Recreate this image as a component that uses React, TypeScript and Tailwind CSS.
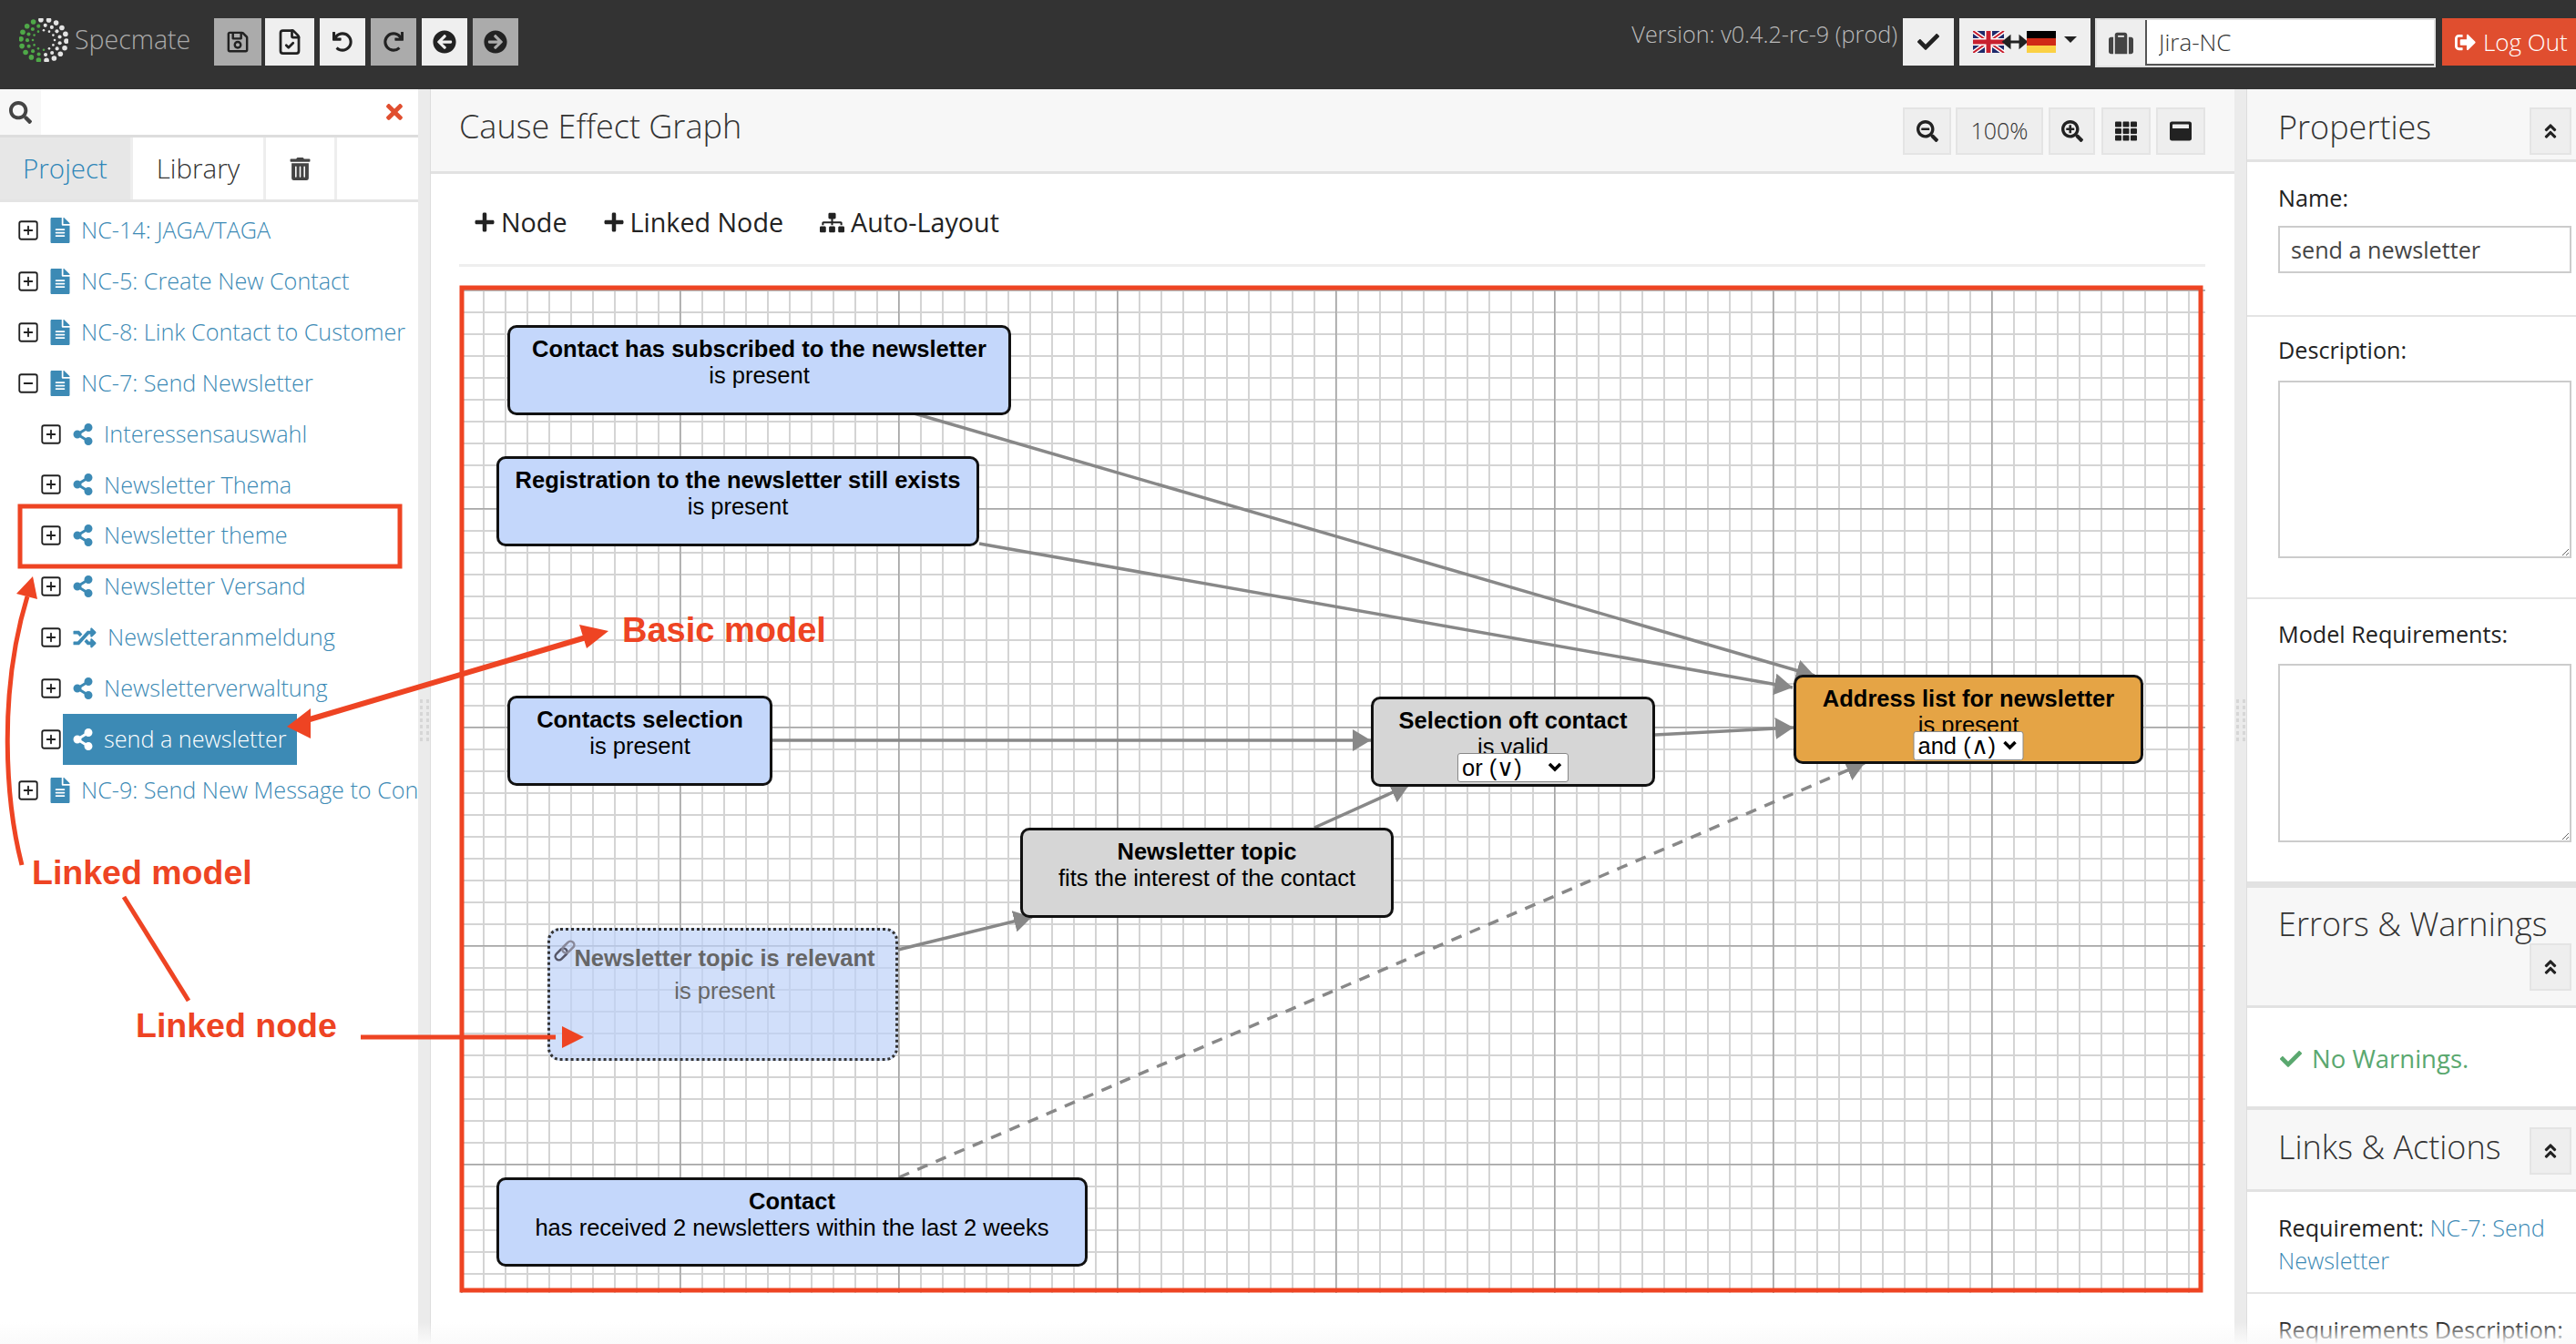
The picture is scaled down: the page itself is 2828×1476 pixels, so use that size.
import React from 'react';
import { FileCheck, SquareMinus, SquarePlus } from 'lucide-react';
import {
    FaAngleDoubleUp, FaArrowCircleLeft, FaArrowCircleRight, FaCheck, FaFileAlt, FaPlus, FaRandom, FaRedo, FaRegSave,
    FaSearch, FaSearchMinus, FaSearchPlus, FaShareAlt, FaSignOutAlt, FaSitemap, FaSuitcase, FaTh, FaTimes, FaTrashAlt,
    FaUndo, FaWindowMaximize,
} from 'react-icons/fa';

const TREE = [
    { label: 'NC-14: JAGA/TAGA', kind: 'doc' },
    { label: 'NC-5: Create New Contact', kind: 'doc' },
    { label: 'NC-8: Link Contact to Customer', kind: 'doc' },
    { label: 'NC-7: Send Newsletter', kind: 'doc', open: true },
    { label: 'Interessensauswahl', kind: 'share', child: true },
    { label: 'Newsletter Thema', kind: 'share', child: true },
    { label: 'Newsletter theme', kind: 'share', child: true },
    { label: 'Newsletter Versand', kind: 'share', child: true },
    { label: 'Newsletteranmeldung', kind: 'random', child: true },
    { label: 'Newsletterverwaltung', kind: 'share', child: true },
    { label: 'send a newsletter', kind: 'share', child: true, selected: true },
    { label: 'NC-9: Send New Message to Contact', kind: 'doc' },
];

const NODES = [
    { title: 'Contact has subscribed to the newsletter', sub: 'is present', box: 'left-[53px] top-[44px] w-[553px] h-[99px] bg-[#c4d7fb]' },
    { title: 'Registration to the newsletter still exists', sub: 'is present', box: 'left-[41px] top-[188px] w-[530px] h-[99px] bg-[#c4d7fb]' },
    { title: 'Contacts selection', sub: 'is present', box: 'left-[53px] top-[451px] w-[291px] h-[99px] bg-[#c4d7fb]' },
    { title: 'Selection oft contact', sub: 'is valid', box: 'left-[1001px] top-[452px] w-[312px] h-[99px] bg-[#d6d6d6]', op: 'or (∨)', opBox: 'w-[122px]' },
    { title: 'Address list for newsletter', sub: 'is present', box: 'left-[1465px] top-[428px] w-[384px] h-[98px] bg-[#e5a445]', op: 'and (∧)', opBox: 'w-[121px]' },
    { title: 'Newsletter topic', sub: 'fits the interest of the contact', box: 'left-[616px] top-[596px] w-[410px] h-[99px] bg-[#d6d6d6]' },
    { title: 'Contact', sub: 'has received 2 newsletters within the last 2 weeks', box: 'left-[41px] top-[980px] w-[649px] h-[98px] bg-[#c4d7fb]' },
];

const ToolButton = ({ children, dim, className }: { children: React.ReactNode; dim?: boolean; className: string }) => (
    <div className={`h-[52px] flex items-center justify-center text-[26px] text-[#222] ${dim ? 'bg-[#ababab]' : 'bg-[#efefef]'} ${className}`}>
        {children}
    </div>
);

const ViewButton = ({ children, className }: { children: React.ReactNode; className: string }) => (
    <div className={`h-[52px] flex items-center justify-center bg-[#eee] border-2 border-[#e4e4e4] text-[#222] text-[24px] ${className}`}>
        {children}
    </div>
);

const CollapseButton = ({ className }: { className?: string }) => (
    <div className={`w-[46px] h-[52px] flex items-center justify-center bg-[#eee] border-2 border-[#e4e4e4] text-[#222] text-[20px] ${className ?? ''}`}>
        <FaAngleDoubleUp />
    </div>
);

const Logo = () => {
    const dots: React.ReactNode[] = [];
    [12, 18, 25].forEach((r, ring) => {
        const count = 12 + ring * 3;
        for (let i = 0; i < count; i++) {
            const a = (i / count) * Math.PI * 2 + ring * 0.2;
            const x = 27 + Math.cos(a) * r;
            const y = 24 + Math.sin(a) * r * 0.9;
            const green = Math.cos(a) < -0.25 || (Math.sin(a) > 0.75 && Math.cos(a) < 0.1);
            dots.push(<circle key={`${ring}-${i}`} cx={x} cy={y} r={1.3 + ring * 0.75} fill={green ? '#4fa848' : '#e4e4e4'} />);
        }
    });
    return <svg width="54" height="48" viewBox="0 0 54 48">{dots}</svg>;
};

const Flags = () => (
    <svg width="92" height="24" viewBox="0 0 92 24">
        <rect width="34" height="24" fill="#1f2a6b" />
        <path d="M0 0L34 24M34 0L0 24" stroke="#fff" strokeWidth="5" />
        <path d="M0 0L34 24M34 0L0 24" stroke="#c8202f" strokeWidth="2" />
        <path d="M17 0V24M0 12H34" stroke="#fff" strokeWidth="8" />
        <path d="M17 0V24M0 12H34" stroke="#c8202f" strokeWidth="5" />
        <path d="M38 12H54M34 12l6-5v10zM58 12l-6-5v10z" stroke="#222" strokeWidth="3" fill="#222" />
        <rect x="59" width="32" height="8" fill="#000" />
        <rect x="59" y="8" width="32" height="8" fill="#d02a16" />
        <rect x="59" y="16" width="32" height="8" fill="#fbd144" />
    </svg>
);

const TreeRow = ({ label, kind, child, open, selected }: { label: string; kind: string; child?: boolean; open?: boolean; selected?: boolean }) => (
    <div className={`h-[55.9px] flex items-center whitespace-nowrap ${child ? 'pl-[43px]' : 'pl-[18px]'}`}>
        {open ? <SquareMinus size={26} strokeWidth={1.7} className="text-[#222] shrink-0" /> : <SquarePlus size={26} strokeWidth={1.7} className="text-[#222] shrink-0" />}
        <div className={`flex items-center h-[56px] pl-[10px] pr-[10px] border border-transparent ${selected ? 'bg-[#3c8ab5] border-[#337ba5] text-white' : 'text-[#3c8ab5]'}`}>
            {kind === 'doc' && <FaFileAlt className="text-[28px] w-[22px] mr-[12px]" />}
            {kind === 'share' && <FaShareAlt className="text-[24px] w-[22px] mr-[12px]" />}
            {kind === 'random' && <FaRandom className="text-[25px] w-[26px] mr-[12px]" />}
            <span className="text-[25.2px] font-light">{label}</span>
        </div>
    </div>
);

const Sidebar = () => (
    <aside className="w-[459px] shrink-0 bg-white flex flex-col overflow-hidden">
        <div className="h-[53px] flex border-b-[3px] border-[#ddd]">
            <div className="w-[45px] bg-[#f7f7f7] flex items-center justify-center text-[#444] text-[25px]"><FaSearch /></div>
            <div className="flex-1 ml-[4px] flex items-center justify-end pr-[13px] text-[#e04e2f] text-[26px]"><FaTimes /></div>
        </div>
        <div className="h-[71px] flex border-b-[3px] border-[#e4e4e4] text-[29.5px]">
            <div className="w-[143px] bg-[#e7e7e7] text-[#2f86b8] flex items-center justify-center font-light">Project</div>
            <div className="w-[149px] border-x-[3px] border-[#eee] text-[#333] flex items-center justify-center font-light">Library</div>
            <div className="w-[78px] border-r-[3px] border-[#eee] text-[#444] flex items-center justify-center text-[25px]"><FaTrashAlt /></div>
        </div>
        <div className="pt-[3px]">
            {TREE.map(row => <TreeRow key={row.label} {...row} />)}
        </div>
    </aside>
);

const Splitter = ({ handleClass }: { handleClass: string }) => (
    <div className="w-[14px] shrink-0 bg-[#ebebeb] border-r border-[#ddd] flex flex-col">
        <div className={handleClass} />
        <div className="grid grid-cols-2 gap-[3px] w-[10px] ml-[2px]">
            {Array.from({ length: 14 }).map((_, i) => <div key={i} className="w-[3px] h-[4px] bg-[#d6d6d6]" />)}
        </div>
    </div>
);

const GraphNode = ({ title, sub, box, op, opBox }: { title: string; sub: string; box: string; op?: string; opBox?: string }) => (
    <div className={`absolute rounded-[10px] border-[3px] border-[#111] text-black text-center font-['Liberation_Sans',sans-serif] text-[25.5px] leading-[29px] pt-[9px] ${box}`}>
        <div className="font-bold">{title}</div>
        <div>{sub}</div>
        {op && (
            <div className={`absolute left-1/2 -translate-x-1/2 top-[59px] h-[32px] bg-white rounded-[3px] border border-[#888] text-left pl-[4px] leading-[30px] ${opBox}`}>
                {op}
                <svg className="absolute right-[6px] top-[9px]" width="16" height="11" viewBox="0 0 16 11"><path d="M2 2l6 6 6-6" fill="none" stroke="#000" strokeWidth="3.5" /></svg>
            </div>
        )}
    </div>
);

const Canvas = () => (
    <div className="relative w-[1917px] h-[1107px] mt-[23px]">
        <svg className="absolute inset-0" width="1917" height="1107" viewBox="504 313 1917 1107">
            <defs>
                <pattern id="minor" x="506" y="318" width="24" height="24" patternUnits="userSpaceOnUse">
                    <rect width="2" height="24" fill="#d4d4d4" />
                    <rect width="24" height="2" fill="#d4d4d4" />
                </pattern>
                <pattern id="major" x="506" y="318" width="240" height="240" patternUnits="userSpaceOnUse">
                    <rect width="1.5" height="240" fill="#a6a6a6" />
                    <rect width="240" height="1.5" fill="#a6a6a6" />
                </pattern>
                <marker id="head" markerUnits="userSpaceOnUse" markerWidth="22" markerHeight="24" refX="20" refY="12" orient="auto">
                    <path d="M0 0L20 12L0 24z" fill="#888" />
                </marker>
            </defs>
            <rect x="505" y="318" width="1916" height="1102" fill="url(#minor)" />
            <rect x="505" y="318" width="1916" height="1102" fill="url(#major)" />
            <g stroke="#888" strokeWidth="3.5" fill="none">
                <path d="M1000 453L1992 742" markerEnd="url(#head)" />
                <path d="M1075 597L1968 755" markerEnd="url(#head)" />
                <path d="M848 813L1505 813" markerEnd="url(#head)" />
                <path d="M1817 807L1969 799" markerEnd="url(#head)" />
                <path d="M1443 909L1547 862" markerEnd="url(#head)" />
                <path d="M986 1043L1133 1007" markerEnd="url(#head)" />
                <path d="M987 1293L2047 838" strokeDasharray="12 10" markerEnd="url(#head)" />
            </g>
        </svg>
        {NODES.map(node => <GraphNode key={node.title} {...node} />)}
        <div className="absolute left-[97px] top-[706px] w-[385px] h-[146px] rounded-[14px] border-[3px] border-dotted border-[#333] bg-[#bdd2f8]/70 text-[#666] text-center font-['Liberation_Sans',sans-serif] text-[25.5px] pt-[12px] pl-[4px] leading-[36px]">
            <svg className="absolute left-[2px] top-[8px]" width="28" height="28" viewBox="0 0 28 28">
                <g fill="none" strokeWidth="2.5" transform="rotate(-45 14 14)">
                    <rect x="1" y="10" width="15" height="8" rx="4" stroke="#556" />
                    <rect x="12" y="10" width="15" height="8" rx="4" stroke="#889" />
                </g>
            </svg>
            <div className="font-bold">Newsletter topic is relevant</div>
            <div>is present</div>
        </div>
    </div>
);

const MainArea = () => (
    <main className="w-[1980px] shrink-0 bg-white flex flex-col overflow-hidden">
        <div className="h-[93px] shrink-0 bg-[#f7f7f7] border-b-[3px] border-[#e2e2e2] pl-[31px] pr-[32px] flex justify-between">
            <h1 className="text-[36px] font-light text-[#333] mt-[17px] h-[48px] leading-[48px]">Cause Effect Graph</h1>
            <div className="flex mt-[20px] h-[52px]">
                <ViewButton className="w-[53px]"><FaSearchMinus /></ViewButton>
                <ViewButton className="w-[96px] ml-[5px] !text-[25px] font-light text-[#333]">100%</ViewButton>
                <ViewButton className="w-[51px] ml-[6px]"><FaSearchPlus /></ViewButton>
                <ViewButton className="w-[54px] ml-[7px]"><FaTh /></ViewButton>
                <ViewButton className="w-[54px] ml-[6px]"><FaWindowMaximize /></ViewButton>
            </div>
        </div>
        <div className="flex-1 pl-[31px]">
            <div className="h-[102px] w-[1917px] border-b-[3px] border-[#eee] flex items-center pl-[16px] pt-[7px] text-[28.7px] text-[#222] -mb-[3px]">
                <FaPlus className="text-[24px] mr-[6px]" /><span>Node</span>
                <FaPlus className="text-[24px] ml-[39px] mr-[6px]" /><span>Linked Node</span>
                <FaSitemap className="text-[27px] ml-[40px] mr-[7px]" /><span>Auto-Layout</span>
            </div>
            <Canvas />
        </div>
    </main>
);

const Label = ({ children }: { children: React.ReactNode }) => <label className="block h-[34px] leading-[34px] text-[25.2px] text-[#222]">{children}</label>;

const PropertiesPanel = () => (
    <section className="flex-1 bg-white flex flex-col overflow-hidden">
        <div className="h-[80px] shrink-0 bg-[#f7f7f7] border-b-[3px] border-[#e2e2e2] pl-[34px] pr-[5px] flex justify-between">
            <h2 className="mt-[17px] h-[50px] leading-[50px] text-[36px] font-light text-[#333]">Properties</h2>
            <CollapseButton className="mt-[20px]" />
        </div>
        <div className="h-[170px] shrink-0 border-b-2 border-[#e4e4e4] pl-[34px] pr-[5px] pt-[22px]">
            <Label>Name:</Label>
            <input readOnly value="send a newsletter" className="mt-[14px] w-full h-[52px] border-2 border-[#ccc] px-[12px] text-[25.2px] text-[#444] bg-white outline-none" />
        </div>
        <div className="h-[310px] shrink-0 border-b-2 border-[#e4e4e4] pl-[34px] pr-[5px] pt-[19px]">
            <Label>Description:</Label>
            <textarea readOnly className="block mt-[17px] w-full h-[195px] border-2 border-[#ccc] bg-white outline-none" />
        </div>
        <div className="h-[310px] shrink-0 pl-[34px] pr-[5px] pt-[21px]">
            <Label>Model Requirements:</Label>
            <textarea readOnly className="block mt-[16px] w-full h-[196px] border-2 border-[#ccc] bg-white outline-none" />
        </div>
        <div className="h-[139px] shrink-0 bg-[#f7f7f7] border-t-[7px] border-b-[3px] border-[#e2e2e2] pl-[34px] pr-[5px] pt-[18px] flex flex-col">
            <h2 className="h-[43px] leading-[43px] text-[36px] font-light text-[#333]">Errors &amp; Warnings</h2>
            <CollapseButton className="self-end" />
        </div>
        <div className="h-[108px] shrink-0 pl-[36px] pt-[4px] flex items-center text-[27.5px] text-[#5aa86f]">
            <FaCheck className="text-[24px] mr-[11px]" /><span>No Warnings.</span>
        </div>
        <div className="h-[94px] shrink-0 bg-[#f7f7f7] border-t-[4px] border-b-[3px] border-[#e2e2e2] pl-[34px] pr-[5px] flex justify-between">
            <h2 className="mt-[16px] h-[50px] leading-[50px] text-[36px] font-light text-[#333]">Links &amp; Actions</h2>
            <CollapseButton className="mt-[19px]" />
        </div>
        <div className="h-[112px] shrink-0 border-b-2 border-[#e4e4e4] pl-[34px] pr-[5px] pt-[21px] text-[25.2px] leading-[36px] text-[#222]">
            Requirement: <span className="text-[#3c8ab5] font-light">NC-7: Send Newsletter</span>
        </div>
        <div className="pl-[34px] pt-[21px] text-[25.2px] leading-[36px] text-[#222] whitespace-nowrap">Requirements Description:</div>
    </section>
);

const TopBar = () => (
    <header className="h-[98px] shrink-0 bg-[#333] flex items-start pt-[20px] pl-[21px]">
        <Logo />
        <span className="text-[#aaa] text-[28.5px] font-light ml-[7px] mt-[1px] leading-[44px] w-[153px]">Specmate</span>
        <div className="flex">
            <ToolButton dim className="w-[52px]"><FaRegSave /></ToolButton>
            <ToolButton className="w-[54px] ml-[4px]"><FileCheck size={30} strokeWidth={2.2} /></ToolButton>
            <ToolButton className="w-[50px] ml-[6px]"><FaUndo className="text-[22px]" /></ToolButton>
            <ToolButton dim className="w-[50px] ml-[6px]"><FaRedo className="text-[22px]" /></ToolButton>
            <ToolButton className="w-[50px] ml-[6px]"><FaArrowCircleLeft /></ToolButton>
            <ToolButton dim className="w-[50px] ml-[6px]"><FaArrowCircleRight /></ToolButton>
        </div>
        <span className="ml-auto text-[#bbb] text-[25.2px] font-light leading-[34px]">Version: v0.4.2-rc-9 (prod)</span>
        <div className="w-[56px] h-[52px] ml-[6px] bg-[#efefef] flex items-center justify-center text-[24px] text-[#222]"><FaCheck /></div>
        <div className="w-[144px] h-[52px] ml-[6px] bg-[#efefef] flex items-center pl-[15px]">
            <Flags />
            <div className="ml-[8px] -mt-[6px] border-x-[7px] border-x-transparent border-t-[7px] border-t-[#222]" />
        </div>
        <div className="w-[374px] h-[54px] ml-[5px] bg-[#e6e6e6] flex border-2 border-[#e0e0e0]">
            <div className="w-[53px] flex items-center justify-center text-[#444] text-[27px] bg-[#eee]"><FaSuitcase /></div>
            <input readOnly value="Jira-NC" className="flex-1 min-w-0 bg-white border-l-2 border-b-2 border-[#555] pl-[13px] text-[26px] font-light text-[#333] outline-none" />
        </div>
        <div className="w-[147px] h-[52px] ml-[7px] bg-[#e04e2f] text-white flex items-center pl-[14px] text-[26px] font-light whitespace-nowrap">
            <FaSignOutAlt className="text-[23px] mr-[8px] shrink-0" />Log Out
        </div>
    </header>
);

// red callouts drawn on top of the screenshot
const Annotations = () => (
    <>
        <svg className="absolute inset-0 pointer-events-none" width="2828" height="1476" viewBox="0 0 2828 1476">
            <g fill="none" stroke="#ee4423">
                <rect x="507" y="316" width="1909" height="1101" strokeWidth="5" />
                <rect x="22" y="556" width="417" height="66" strokeWidth="5" />
                <path d="M24 950C6 880 -2 760 30 655" strokeWidth="5" />
                <path d="M136 985L207 1099" strokeWidth="5" />
                <path d="M396 1139H610" strokeWidth="5" />
                <path d="M340 790L650 698" strokeWidth="6" />
            </g>
            <g fill="#ee4423">
                <path d="M36 633L18 652L41 658z" />
                <path d="M641 1139L617 1127V1151z" />
                <path d="M315 798L341 778L341 811z" />
                <path d="M668 693L636 686L644 712z" />
            </g>
        </svg>
        <div className="absolute left-[683px] top-[670px] font-['Liberation_Sans',sans-serif] font-bold text-[38px] leading-[44px] text-[#ee4423] whitespace-nowrap">Basic model</div>
        <div className="absolute left-[35px] top-[936px] font-['Liberation_Sans',sans-serif] font-bold text-[37.5px] leading-[44px] text-[#ee4423] whitespace-nowrap">Linked model</div>
        <div className="absolute left-[149px] top-[1104px] font-['Liberation_Sans',sans-serif] font-bold text-[37.5px] leading-[44px] text-[#ee4423] whitespace-nowrap">Linked node</div>
    </>
);

const App: React.FC = () => (
    <div className="relative w-[2828px] h-[1476px] overflow-hidden bg-white flex flex-col font-['Open_Sans',sans-serif]">
        <TopBar />
        <div className="flex flex-1 min-h-0">
            <Sidebar />
            <Splitter handleClass="h-[670px] shrink-0" />
            <MainArea />
            <Splitter handleClass="h-[670px] shrink-0" />
            <PropertiesPanel />
        </div>
        <div className="absolute inset-x-0 bottom-0 h-[24px] bg-linear-to-b from-transparent to-[#fafafa] pointer-events-none" />
        <Annotations />
    </div>
);

export default App;
